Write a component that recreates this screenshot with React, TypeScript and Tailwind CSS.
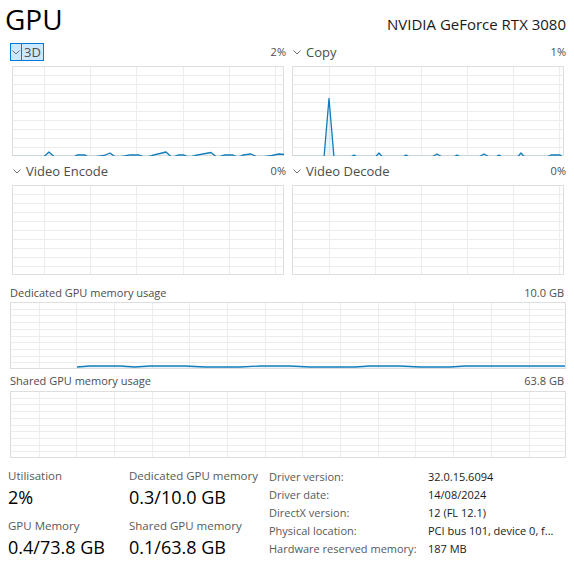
import React from 'react'

type Pt = [number, number]

const BLUE = '#117dbb'

function Chevron() {
  return (
    <svg width="8" height="5" viewBox="0 0 8 5" className="shrink-0">
      <polyline points="0.5,0.5 4,4 7.5,0.5" fill="none" stroke="#707070" strokeWidth="1" />
    </svg>
  )
}

interface GraphProps {
  w: number
  h: number
  rows: number
  colStart: number
  colStep: number
  points?: Pt[]
  base?: number
}

function Graph({ w, h, rows, colStart, colStep, points, base = 0.5 }: GraphProps) {
  const hLines: number[] = []
  for (let i = 1; i < rows; i++) hLines.push(Math.round((h * i) / rows) + 0.5)
  const vLines: number[] = []
  for (let x = colStart; x < w - 1; x += colStep) vLines.push(Math.round(x) + 0.5)

  let line = ''
  let area = ''
  if (points && points.length) {
    line = points.map(([x, v]) => `${x},${h - base - v}`).join(' ')
    area = `${points[0][0]},${h - 1} ${line} ${points[points.length - 1][0]},${h - 1}`
  }

  return (
    <svg width={w} height={h} viewBox={`0 0 ${w} ${h}`} className="block">
      {hLines.map((y) => (
        <line key={'h' + y} x1="0" x2={w} y1={y} y2={y} stroke="#ececec" strokeWidth="1" />
      ))}
      {vLines.map((x) => (
        <line key={'v' + x} x1={x} x2={x} y1="0" y2={h} stroke="#ececec" strokeWidth="1" />
      ))}
      <rect x="0.5" y="0.5" width={w - 1} height={h - 1} fill="none" stroke="#dedede" strokeWidth="1" />
      {area && <polygon points={area} fill={BLUE} fillOpacity="0.08" />}
      {line && <polyline points={line} fill="none" stroke={BLUE} strokeWidth="1.3" strokeLinejoin="round" />}
    </svg>
  )
}

const pts3d: Pt[] = [
  [0, -2], [31, -2], [37, 3.5], [43, -2], [61, -2], [65, 0.5], [73, 0.5], [77, -2], [92, 0], [98, 2.5], [104, -2],
  [118, 0.5], [127, 0.5], [133, -2], [140, 0], [154, 3.5], [160, -2], [166, 0.5], [172, 0.5], [177, -2], [183, 0],
  [199, 3], [205, -2], [212, 0.5], [221, 0.5], [226, -2], [231, 0.5], [239, 1.5], [246, -2], [260, 0], [267, 1.5], [272, 1],
]

const ptsCopy: Pt[] = [
  [0, -2], [32, -2], [37, 57], [42, -2], [58, -2], [62, 0.5], [66, -2], [83, -2], [87, 2.5], [91, -2], [110, -2],
  [114, 0.5], [118, -2], [139, -2], [145, 1.5], [151, -2], [161, -2], [165, 0.5], [169, -2], [186, -2], [192, 1.5],
  [198, -2], [203, -2], [207, 0.5], [211, -2], [225, -2], [229, 2.5], [233, -2], [254, -2], [259, 0.5], [268, 0.5], [271, -2],
]

const ptsDedicated: Pt[] = [
  [67, 0.5], [80, 1.5], [110, 1.5], [125, 0.5], [140, 1.5], [175, 1.5], [195, 0.5], [230, 0.5],
  [250, 1.5], [280, 1.5], [300, 0.5], [345, 0.5], [360, 1.5], [390, 1.5], [410, 0.5], [440, 0.5],
  [455, 1.5], [490, 1.5], [520, 1.5], [555, 1.5],
]

function EngineHeader({ label, value, selected }: { label: string; value: string; selected?: boolean }) {
  return (
    <div className="flex h-[18px] items-center justify-between">
      {selected ? (
        <div className="flex h-[18px] items-stretch border border-[#0078d7] bg-[#cce8ff]">
          <div className="flex w-[11px] items-center justify-center border-r border-[#0078d7]">
            <Chevron />
          </div>
          <span className="px-[2px] text-[13px] leading-[16px] text-[#4d4d4d]">{label}</span>
        </div>
      ) : (
        <div className="flex items-center">
          <div className="flex w-[12px] justify-center pl-[2px]">
            <Chevron />
          </div>
          <span className="ml-[4px] text-[13px] leading-[18px] text-[#4d4d4d]">{label}</span>
        </div>
      )}
      <span className="text-[11px] leading-[18px] text-[#4d4d4d]">{value}</span>
    </div>
  )
}

const details: [string, string][] = [
  ['Driver version:', '32.0.15.6094'],
  ['Driver date:', '14/08/2024'],
  ['DirectX version:', '12 (FL 12.1)'],
  ['Physical location:', 'PCI bus 101, device 0, f...'],
  ['Hardware reserved memory:', '187 MB'],
]

export default function App() {
  return (
    <div className="h-[568px] w-[574px] overflow-hidden bg-white font-['Open_Sans',sans-serif] text-black">
      {/* Title */}
      <div className="flex items-baseline justify-between pl-[5px] pr-[8px] pt-[1px]">
        <h1 className="text-[28px] font-normal leading-[36px]">GPU</h1>
        <span className="text-[15px] leading-[20px] text-[#1a1a1a]">NVIDIA GeForce RTX 3080</span>
      </div>

      {/* Engine graphs */}
      <div className="mt-[6px] grid grid-cols-[276px_276px] gap-x-[4px] px-[10px]">
        <div>
          <EngineHeader label="3D" value="2%" selected />
          <div className="ml-[2px] mt-[5px]">
            <Graph w={272} h={90} rows={10} colStart={32} colStep={46.2} points={pts3d} />
          </div>
        </div>
        <div>
          <EngineHeader label="Copy" value="1%" />
          <div className="ml-[2px] mt-[5px]">
            <Graph w={272} h={90} rows={10} colStart={37} colStep={46} points={ptsCopy} />
          </div>
        </div>
        <div className="mt-[6px]">
          <EngineHeader label="Video Encode" value="0%" />
          <div className="ml-[2px] mt-[5px]">
            <Graph w={272} h={90} rows={10} colStart={32} colStep={46.2} />
          </div>
        </div>
        <div className="mt-[6px]">
          <EngineHeader label="Video Decode" value="0%" />
          <div className="ml-[2px] mt-[5px]">
            <Graph w={272} h={90} rows={10} colStart={37} colStep={46} />
          </div>
        </div>
      </div>

      {/* Memory graphs */}
      <div className="mt-[10px] px-[10px] text-[11px] text-[#4d4d4d]">
        <div className="flex justify-between leading-[16px]">
          <span>Dedicated GPU memory usage</span>
          <span>10.0 GB</span>
        </div>
        <div className="mt-[1px]">
          <Graph w={556} h={67} rows={10} colStart={28.5} colStep={37.7} points={ptsDedicated} base={1.5} />
        </div>
        <div className="mt-[4px] flex justify-between leading-[16px]">
          <span>Shared GPU memory usage</span>
          <span>63.8 GB</span>
        </div>
        <div className="mt-[2px]">
          <Graph w={556} h={67} rows={10} colStart={28.5} colStep={37.7} />
        </div>
      </div>

      {/* Stats */}
      <div className="mt-[10px] flex items-start pl-[8px]">
        <div className="w-[121px]">
          <div className="text-[11.5px] leading-[16px] text-[#595959]">Utilisation</div>
          <div className="text-[18px] leading-[26px]">2%</div>
          <div className="mt-[8px] text-[11.5px] leading-[16px] text-[#595959]">GPU Memory</div>
          <div className="text-[18px] leading-[26px]">0.4/73.8 GB</div>
        </div>
        <div className="w-[140px]">
          <div className="text-[11.5px] leading-[16px] text-[#595959]">Dedicated GPU memory</div>
          <div className="text-[18px] leading-[26px]">0.3/10.0 GB</div>
          <div className="mt-[8px] text-[11.5px] leading-[16px] text-[#595959]">Shared GPU memory</div>
          <div className="text-[18px] leading-[26px]">0.1/63.8 GB</div>
        </div>
        <div className="grid grid-cols-[159px_1fr] text-[11px] leading-[18px]">
          {details.map(([k, v]) => (
            <React.Fragment key={k}>
              <span className="whitespace-nowrap text-[#595959]">{k}</span>
              <span className="whitespace-nowrap text-[#1a1a1a]">{v}</span>
            </React.Fragment>
          ))}
        </div>
      </div>
    </div>
  )
}
